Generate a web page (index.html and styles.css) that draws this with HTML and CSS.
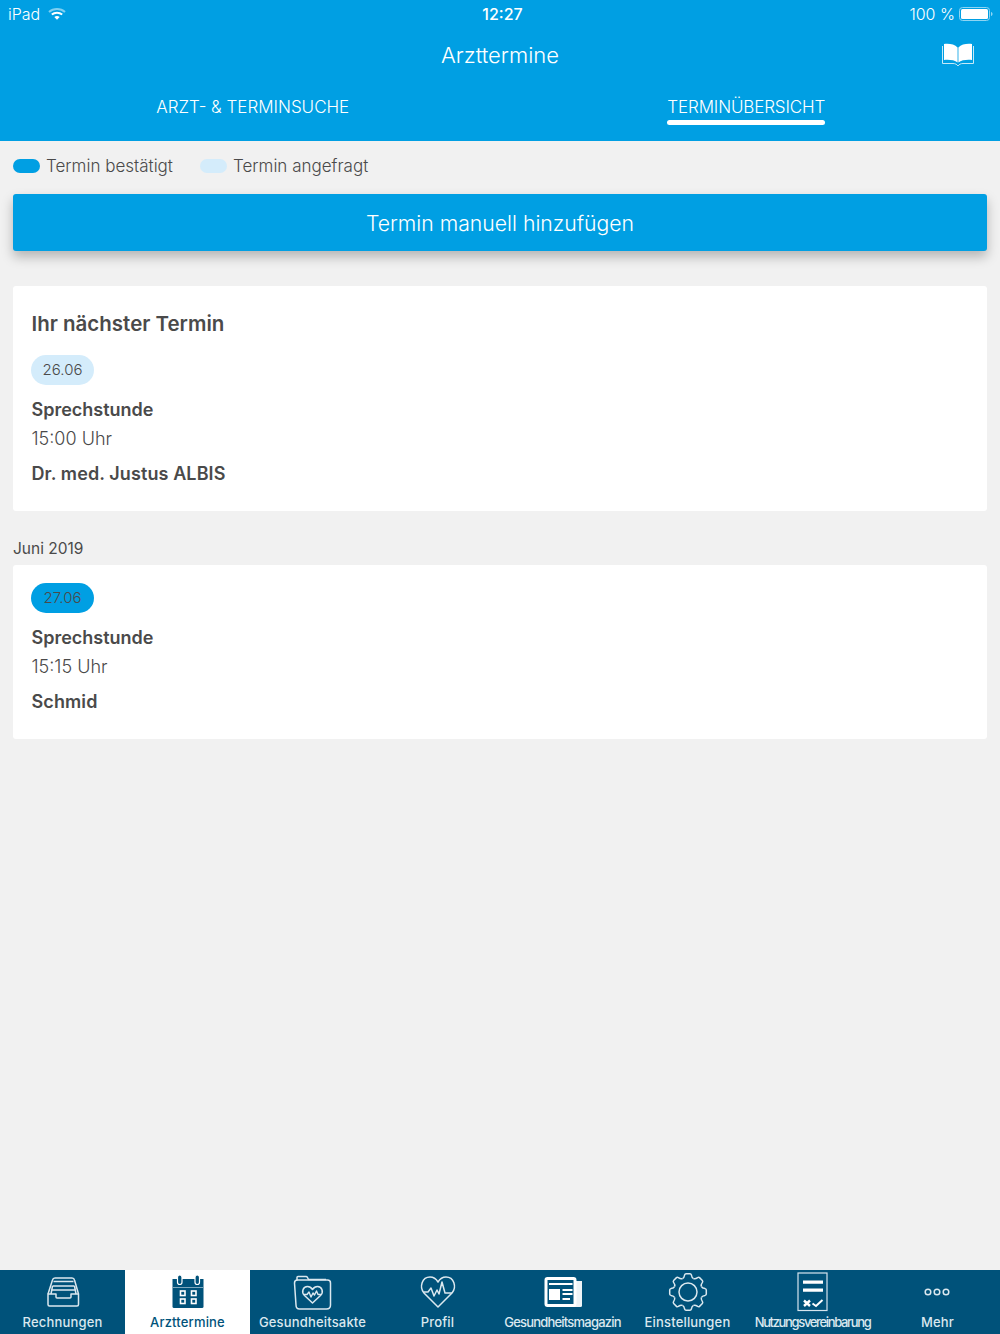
FILE: index.html
```html
<!DOCTYPE html>
<html lang="de">
<head>
  <meta charset="UTF-8">
  <title>Arzttermine</title>
  <link rel="stylesheet" href="styles.css">
</head>
<body>
  <div class="page">
    <header class="top">
      <div class="status">
        <div class="status-left">
          <span>iPad</span>
          <svg class="wifi" width="18" height="14" viewBox="0 0 18 14">
            <path d="M1 5 C5.5 1 12.5 1 17 5" fill="none" stroke="#7fcff1" stroke-width="2"/>
            <path d="M3.8 7.6 C6.8 5 11.2 5 14.2 7.6" fill="none" stroke="#fff" stroke-width="2"/>
            <path d="M6.3 10 C8 8.7 10 8.7 11.7 10 L9 12.8 Z" fill="#fff"/>
          </svg>
        </div>
        <div class="status-time">12:27</div>
        <div class="status-right">
          <span>100 %</span>
          <svg width="34" height="14" viewBox="0 0 34 14">
            <rect x="0.5" y="0.5" width="30" height="13" rx="3" fill="none" stroke="#8fd5f3"/>
            <rect x="2" y="2" width="27" height="10" rx="1.5" fill="#fff"/>
            <path d="M32 5 C33 5.3 33.5 6 33.5 7 C33.5 8 33 8.7 32 9 Z" fill="#8fd5f3"/>
          </svg>
        </div>
      </div>
      <div class="titlebar">
        <h1>Arzttermine</h1>
        <svg class="book" width="32" height="24" viewBox="0 0 32 24">
          <path d="M2 1 C7 0.5 12.5 1 15.6 4.5 V19.5 C12.5 17 7 16.5 2 17 Z" fill="#fff"/>
          <path d="M30 1 C25 0.5 19.5 1 16.4 4.5 V19.5 C19.5 17 25 16.5 30 17 Z" fill="#fff"/>
          <path d="M0.5 3 V20.5 H11 C13.5 20.5 15 21.5 16 23 C17 21.5 18.5 20.5 21 20.5 H31.5 V3" fill="none" stroke="#c6e9f8" stroke-width="1"/>
        </svg>
      </div>
      <nav class="tabs">
        <div class="tab"><span class="tab-label">ARZT- &amp; TERMINSUCHE</span></div>
        <div class="tab"><span class="tab-label is-active">TERMINÜBERSICHT</span></div>
      </nav>
    </header>

    <main class="content">
      <div class="legend">
        <div class="legend-item"><span class="legend-dot dot-confirmed"></span>Termin bestätigt</div>
        <div class="legend-item"><span class="legend-dot dot-requested"></span>Termin angefragt</div>
      </div>

      <button class="add-button">Termin manuell hinzufügen</button>

      <section class="card card-next">
        <h2>Ihr nächster Termin</h2>
        <div class="date-pill pill-requested">26.06</div>
        <div class="appt-type">Sprechstunde</div>
        <div class="appt-time">15:00 Uhr</div>
        <div class="appt-doctor">Dr. med. Justus ALBIS</div>
      </section>

      <div class="month">Juni 2019</div>

      <section class="card">
        <div class="date-pill pill-confirmed">27.06</div>
        <div class="appt-type">Sprechstunde</div>
        <div class="appt-time">15:15 Uhr</div>
        <div class="appt-doctor">Schmid</div>
      </section>
    </main>

    <nav class="tabbar">
      <div class="tabbar-item">
        <svg viewBox="0 0 40 40" class="line-icon">
          <path d="M5 22 V32.5 Q5 34 6.5 34 H34 Q35.5 34 35.5 32.5 V22 H28 V25 Q28 26 27 26 H14 Q13 26 13 25 V22 Z"/>
          <path d="M5 22 L9.5 8 Q10 6 12 6 H29 Q31 6 31.5 8 L35.5 22"/>
          <path d="M10.5 9.5 H30.5 M9.5 14 H31.5 M8.5 18 H32.5 M9.5 14 L8 22 M31.5 14 L33 22"/>
        </svg>
        <span>Rechnungen</span>
      </div>
      <div class="tabbar-item is-current">
        <svg viewBox="0 0 40 40">
          <path d="M4.5 7 H35.5 V34.5 Q35.5 36 34 36 H6 Q4.5 36 4.5 34.5 Z" fill="#00527a"/>
          <path d="M4.5 15.5 H35.5" stroke="#7ea8bd" stroke-width="1"/>
          <rect x="9.5" y="3" width="4.5" height="9.5" rx="2.2" fill="#00527a" stroke="#fff" stroke-width="1.2"/>
          <rect x="27" y="3" width="4.5" height="9.5" rx="2.2" fill="#00527a" stroke="#fff" stroke-width="1.2"/>
          <g fill="none" stroke="#fff" stroke-width="1.6">
            <rect x="12.5" y="19" width="4.5" height="4.5"/>
            <rect x="23.5" y="19" width="4.5" height="4.5"/>
            <rect x="12.5" y="27" width="4.5" height="4.5"/>
            <rect x="23.5" y="27" width="4.5" height="4.5"/>
          </g>
        </svg>
        <span>Arzttermine</span>
      </div>
      <div class="tabbar-item">
        <svg viewBox="0 0 40 40" class="line-icon">
          <path d="M4 8.5 V5.5 Q4 4.5 5 4.5 H13 Q14 4.5 14.5 5.5 L15.5 7.5 H33"/>
          <path d="M4.5 8 H34.5 Q37.5 8 37.5 11 V33 Q37.5 37 33.5 37 H6.5 Q3 37 3 33 L1.5 11 Q1.5 8 4.5 8 Z"/>
          <path d="M19.5 31 L11.5 23.5 C8 20 10 14.5 14.5 14.5 C17 14.5 18.5 16 19.5 17.5 C20.5 16 22 14.5 24.5 14.5 C29 14.5 31 20 27.5 23.5 Z"/>
          <path d="M11 22.5 H14 L16 20 L18 25 L20 21 L21.5 23 L23.5 19 L25 22.5 H28" stroke-width="1.4"/>
        </svg>
        <span>Gesundheitsakte</span>
      </div>
      <div class="tabbar-item">
        <svg viewBox="0 0 40 40" class="line-icon">
          <path d="M20 35 L6 21 C1 15 4 5 12 5 C16 5 18.5 7.5 20 10 C21.5 7.5 24 5 28 5 C36 5 39 15 34 21 Z"/>
          <path d="M6 20 H10 L13 16 L16 24 L19 18 L21 22 L24 10 L27 21 H34"/>
        </svg>
        <span>Profil</span>
      </div>
      <div class="tabbar-item">
        <svg viewBox="0 0 40 40">
          <path d="M32 9 H39 V33.5 Q39 35 37.5 35 H30 Z" fill="#eef4f7"/>
          <rect x="3" y="6.5" width="29" height="27" rx="1.5" fill="#00527a" stroke="#fff" stroke-width="3"/>
          <path d="M6 11 H29.5 V13 H6 Z M6 17 H17 V28 H6 Z M19.5 17 H29.5 V19 H19.5 Z M19.5 21 H29.5 V23 H19.5 Z M19.5 26 H27 V28 H19.5 Z" fill="#fff"/>
        </svg>
        <span class="tight">Gesundheitsmagazin</span>
      </div>
      <div class="tabbar-item">
        <svg viewBox="0 0 40 40" class="line-icon">
          <defs>
            <path id="gear-tooth" d="M14.45 6.6 C16 6 16.3 5 16.6 3 Q17 1.7 18 1.7 H22 Q23 1.7 23.4 3 C23.7 5 24 6 25.55 6.6"/>
          </defs>
          <use href="#gear-tooth"/>
          <use href="#gear-tooth" transform="rotate(45 20 20)"/>
          <use href="#gear-tooth" transform="rotate(90 20 20)"/>
          <use href="#gear-tooth" transform="rotate(135 20 20)"/>
          <use href="#gear-tooth" transform="rotate(180 20 20)"/>
          <use href="#gear-tooth" transform="rotate(225 20 20)"/>
          <use href="#gear-tooth" transform="rotate(270 20 20)"/>
          <use href="#gear-tooth" transform="rotate(315 20 20)"/>
          <circle cx="20" cy="20" r="9"/>
        </svg>
        <span>Einstellungen</span>
      </div>
      <div class="tabbar-item">
        <svg viewBox="0 0 40 40">
          <rect x="5" y="1" width="29" height="37.5" fill="none" stroke="#d5e5ee" stroke-width="1.2"/>
          <path d="M10 8.5 H30 V11.8 H10 Z M10 16.5 H30 V19.8 H10 Z" fill="#fff"/>
          <path d="M11 28.5 L17 34 M17 28.5 L11 34" stroke="#fff" stroke-width="2.4" fill="none"/>
          <path d="M19.5 31.5 L23 34 L29.5 28" stroke="#fff" stroke-width="2" fill="none"/>
        </svg>
        <span class="tightest">Nutzungsvereinbarung</span>
      </div>
      <div class="tabbar-item">
        <svg viewBox="0 0 40 40" class="line-icon">
          <circle cx="10" cy="20" r="2.8"/>
          <circle cx="19" cy="20" r="2.8"/>
          <circle cx="28" cy="20" r="2.8"/>
        </svg>
        <span>Mehr</span>
      </div>
    </nav>
  </div>
</body>
</html>
```

FILE: styles.css
```css
* {
  box-sizing: border-box;
}
body {
  margin: 0;
  font-family: Inter, "Noto Sans", sans-serif;
  background: #f1f1f1;
  color: #4a4a4a;
}
.page {
  display: flex;
  flex-direction: column;
  height: 1334px;
  overflow: hidden;
}

/* header */
.top {
  background: #009fe3;
  color: white;
  height: 141px;
  flex-shrink: 0;
}
.status {
  display: grid;
  grid-template-columns: 1fr auto 1fr;
  align-items: center;
  height: 28px;
  padding: 0 7px 0 8px;
  font-size: 16px;
  font-weight: 300;
}
.status-left {
  display: flex;
  align-items: center;
  gap: 8px;
}
.status-time {
  font-weight: 500;
  padding-left: 4px;
}
.status-right {
  display: flex;
  align-items: center;
  justify-content: flex-end;
  gap: 4px;
}
.titlebar {
  position: relative;
  display: flex;
  justify-content: center;
  align-items: center;
  height: 54px;
}
.titlebar h1 {
  margin: 0;
  font-size: 22px;
  font-weight: 300;
}
.book {
  position: absolute;
  right: 26px;
  top: 15px;
}
.tabs {
  display: grid;
  grid-template-columns: 1fr 1fr;
  padding: 0 7px 0 6px;
}
.tab {
  display: flex;
  justify-content: center;
}
.tab-label {
  display: block;
  padding-top: 14px;
  line-height: 22px;
  font-size: 17px;
  font-weight: 300;
}
.tab-label.is-active {
  letter-spacing: -0.13px;
}
.tab-label.is-active::after {
  content: "";
  display: block;
  height: 5px;
  margin-top: 2px;
  border-radius: 3px;
  background: white;
}

/* content */
.content {
  flex: 1;
  padding: 0 13px;
}
.legend {
  display: flex;
  gap: 27px;
  height: 53px;
  padding-bottom: 4px;
  align-items: center;
  font-size: 17px;
  font-weight: 350;
}
.legend-item {
  display: flex;
  align-items: center;
  gap: 6px;
}
.legend-dot {
  width: 27px;
  height: 14px;
  border-radius: 7px;
}
.dot-confirmed {
  background: #009fe3;
}
.dot-requested {
  background: #d4ecfb;
}
.add-button {
  display: block;
  width: 100%;
  height: 57px;
  border: none;
  border-radius: 3px;
  background: #009fe3;
  color: white;
  font-family: inherit;
  font-size: 21.2px;
  font-weight: 350;
  box-shadow: 0 6px 12px rgba(0, 0, 0, 0.25);
}
.card {
  background: white;
  border-radius: 3px;
  padding: 18px 18.5px;
  height: 174px;
}
.card-next {
  margin-top: 35px;
  height: 225px;
}
.card h2 {
  margin: 0 0 11px;
  font-size: 20.5px;
  line-height: 40px;
  font-weight: 600;
}
.date-pill {
  width: 63px;
  height: 30px;
  margin-left: -0.5px;
  border-radius: 15px;
  line-height: 30px;
  text-align: center;
  font-size: 15px;
  font-weight: 350;
}
.pill-requested {
  background: #d4ecfb;
}
.pill-confirmed {
  background: #009fe3;
}
.appt-type {
  margin-top: 10px;
  font-size: 18px;
  line-height: 30px;
  font-weight: 600;
}
.appt-time {
  font-size: 18px;
  line-height: 28px;
  font-weight: 300;
}
.appt-doctor {
  margin-top: 6px;
  font-size: 18px;
  line-height: 30px;
  font-weight: 600;
  letter-spacing: 0.1px;
}
.month {
  height: 54px;
  padding-top: 27px;
  line-height: 22px;
  font-size: 15.5px;
  font-weight: 400;
}

/* bottom bar */
.tabbar {
  display: grid;
  grid-template-columns: repeat(8, 125px);
  height: 64px;
  flex-shrink: 0;
  background: #00527a;
  color: #dbe8ef;
}
.tabbar-item {
  display: flex;
  flex-direction: column;
  align-items: center;
  padding-top: 2px;
  font-size: 13px;
  font-weight: 500;
  letter-spacing: 0.17px;
  white-space: nowrap;
}
.tabbar-item svg {
  display: block;
  width: 40px;
  height: 40px;
  flex-shrink: 0;
}
.tabbar-item span {
  margin-top: 2px;
  line-height: 16px;
}
.tabbar-item .tight {
  letter-spacing: -0.8px;
}
.tabbar-item .tightest {
  letter-spacing: -1.35px;
}
.tabbar-item.is-current {
  background: white;
  color: #00527a;
}
.line-icon {
  fill: none;
  stroke: #dbe8ef;
  stroke-width: 1.5;
  stroke-linejoin: round;
}
```
